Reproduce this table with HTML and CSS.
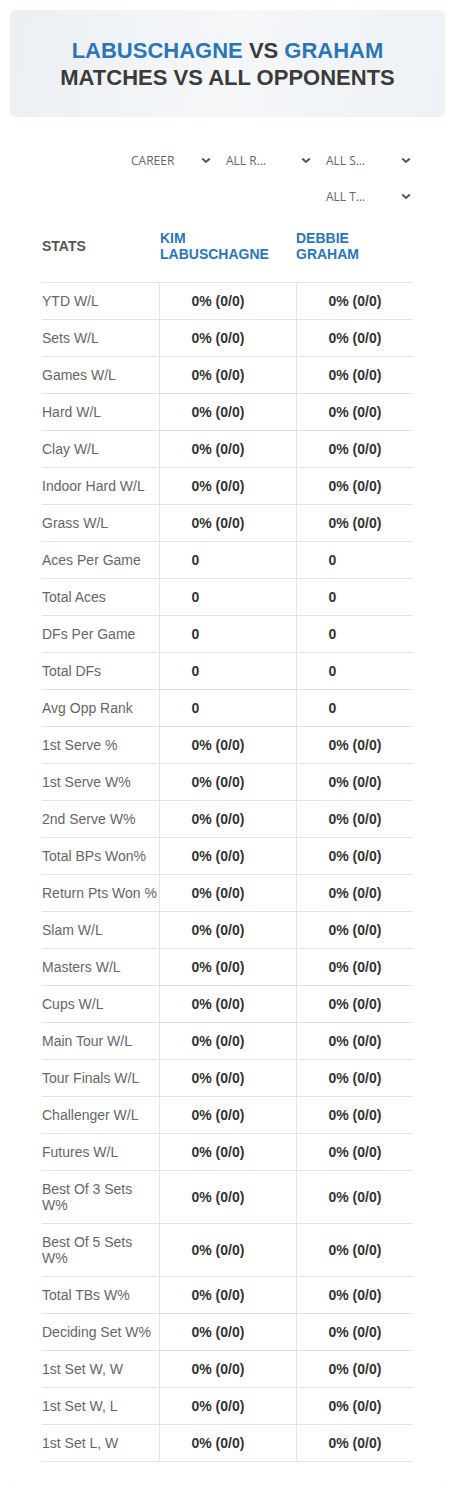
FILE: index.html
```html
<!DOCTYPE html>
<html>
<head>
<meta charset="utf-8">
<link rel="stylesheet" href="styles.css">
</head>
<body>
<div class="hero">
  <h1 class="title"><span class="blue">LABUSCHAGNE</span> VS <span class="blue">GRAHAM</span><br>MATCHES VS ALL OPPONENTS</h1>
</div>
<div class="card">
  <div class="filters">
    <div class="select s1"><span>CAREER</span><svg width="10" height="7" viewBox="0 0 10 7"><polyline points="1.2,1.5 5,5 8.8,1.5" fill="none" stroke="#555" stroke-width="2"/></svg></div>
    <div class="select"><span>ALL R…</span><svg width="10" height="7" viewBox="0 0 10 7"><polyline points="1.2,1.5 5,5 8.8,1.5" fill="none" stroke="#555" stroke-width="2"/></svg></div>
    <div class="select"><span>ALL S…</span><svg width="10" height="7" viewBox="0 0 10 7"><polyline points="1.2,1.5 5,5 8.8,1.5" fill="none" stroke="#555" stroke-width="2"/></svg></div>
    <div class="select"><span>ALL T…</span><svg width="10" height="7" viewBox="0 0 10 7"><polyline points="1.2,1.5 5,5 8.8,1.5" fill="none" stroke="#555" stroke-width="2"/></svg></div>
  </div>
  <table class="stats">
    <colgroup><col class="c1"><col class="c2"><col class="c3"></colgroup>
    <thead>
      <tr><th class="h-stats">STATS</th><th class="h-name">KIM<br>LABUSCHAGNE</th><th class="h-name">DEBBIE<br>GRAHAM</th></tr>
    </thead>
    <tbody>
      <tr><td>YTD W/L</td><td>0% (0/0)</td><td>0% (0/0)</td></tr>
      <tr><td>Sets W/L</td><td>0% (0/0)</td><td>0% (0/0)</td></tr>
      <tr><td>Games W/L</td><td>0% (0/0)</td><td>0% (0/0)</td></tr>
      <tr><td>Hard W/L</td><td>0% (0/0)</td><td>0% (0/0)</td></tr>
      <tr><td>Clay W/L</td><td>0% (0/0)</td><td>0% (0/0)</td></tr>
      <tr><td>Indoor Hard W/L</td><td>0% (0/0)</td><td>0% (0/0)</td></tr>
      <tr><td>Grass W/L</td><td>0% (0/0)</td><td>0% (0/0)</td></tr>
      <tr><td>Aces Per Game</td><td>0</td><td>0</td></tr>
      <tr><td>Total Aces</td><td>0</td><td>0</td></tr>
      <tr><td>DFs Per Game</td><td>0</td><td>0</td></tr>
      <tr><td>Total DFs</td><td>0</td><td>0</td></tr>
      <tr><td>Avg Opp Rank</td><td>0</td><td>0</td></tr>
      <tr><td>1st Serve %</td><td>0% (0/0)</td><td>0% (0/0)</td></tr>
      <tr><td>1st Serve W%</td><td>0% (0/0)</td><td>0% (0/0)</td></tr>
      <tr><td>2nd Serve W%</td><td>0% (0/0)</td><td>0% (0/0)</td></tr>
      <tr><td>Total BPs Won%</td><td>0% (0/0)</td><td>0% (0/0)</td></tr>
      <tr><td>Return Pts Won %</td><td>0% (0/0)</td><td>0% (0/0)</td></tr>
      <tr><td>Slam W/L</td><td>0% (0/0)</td><td>0% (0/0)</td></tr>
      <tr><td>Masters W/L</td><td>0% (0/0)</td><td>0% (0/0)</td></tr>
      <tr><td>Cups W/L</td><td>0% (0/0)</td><td>0% (0/0)</td></tr>
      <tr><td>Main Tour W/L</td><td>0% (0/0)</td><td>0% (0/0)</td></tr>
      <tr><td>Tour Finals W/L</td><td>0% (0/0)</td><td>0% (0/0)</td></tr>
      <tr><td>Challenger W/L</td><td>0% (0/0)</td><td>0% (0/0)</td></tr>
      <tr><td>Futures W/L</td><td>0% (0/0)</td><td>0% (0/0)</td></tr>
      <tr><td>Best Of 3 Sets W%</td><td>0% (0/0)</td><td>0% (0/0)</td></tr>
      <tr><td>Best Of 5 Sets W%</td><td>0% (0/0)</td><td>0% (0/0)</td></tr>
      <tr><td>Total TBs W%</td><td>0% (0/0)</td><td>0% (0/0)</td></tr>
      <tr><td>Deciding Set W%</td><td>0% (0/0)</td><td>0% (0/0)</td></tr>
      <tr><td>1st Set W, W</td><td>0% (0/0)</td><td>0% (0/0)</td></tr>
      <tr><td>1st Set W, L</td><td>0% (0/0)</td><td>0% (0/0)</td></tr>
      <tr><td>1st Set L, W</td><td>0% (0/0)</td><td>0% (0/0)</td></tr>
    </tbody>
  </table>
</div>
</body>
</html>
```
FILE: styles.css
```css
* { box-sizing: border-box; }
body {
  margin: 10px;
  background: #fff;
  font-family: "Liberation Sans", Arial, sans-serif;
}
.hero {
  height: 107px;
  border-radius: 6px;
  background: linear-gradient(100deg, #eceff3 0%, #f5f7f9 50%, #eef1f5 100%);
  display: flex;
  align-items: center;
  justify-content: center;
}
.title {
  margin: 0;
  font-size: 22px;
  line-height: 27px;
  font-weight: bold;
  text-align: center;
  color: #3b3b3b;
}
.blue { color: #2b76b6; }
.card {
  margin-top: 13px;
  padding: 12px 31px 24px 32px;
  border-radius: 6px;
  box-shadow: 0 1px 2px rgba(0,0,0,0.07);
}
.filters {
  display: flex;
  flex-wrap: wrap;
  justify-content: flex-end;
  column-gap: 15px;
  padding-right: 3px;
}
.select {
  width: 85px;
  height: 36px;
  display: flex;
  align-items: center;
  justify-content: space-between;
  font-family: "Open Sans", sans-serif;
  font-size: 12px;
  color: #666;
}
.select.s1 { width: 80px; }
.select svg { display: block; }
.stats {
  width: 371px;
  border-collapse: collapse;
  table-layout: fixed;
}
.c1 { width: 117px; }
.c2 { width: 137px; }
.c3 { width: 117px; }
th {
  text-align: left;
  font-size: 14px;
  line-height: 16px;
  font-weight: bold;
  padding: 16px 0 20px;
  border-bottom: 1px solid #e3e3e3;
}
.h-stats { color: #555; }
.h-name { color: #2b76b6; padding-left: 1px; }
.h-name:last-child { padding-left: 0; }
td {
  font-size: 14px;
  line-height: 16px;
  padding: 10px 0 10px 32px;
  border-bottom: 1px solid #e3e3e3;
  color: #333;
  font-weight: bold;
}
td + td { border-left: 1px solid #e3e3e3; }
td:first-child {
  padding-left: 0;
  padding-right: 0;
  color: #666;
  font-weight: normal;
}
```
